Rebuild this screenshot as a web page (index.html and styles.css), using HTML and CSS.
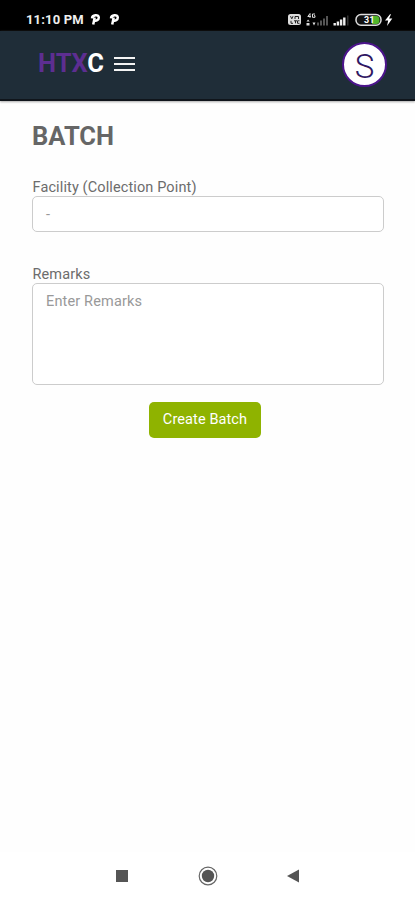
FILE: index.html
```html
<!DOCTYPE html>
<html lang="en">
<head>
<meta charset="utf-8">
<title>Batch</title>
<link rel="stylesheet" href="styles.css">
</head>
<body>
<div class="status">
  <span class="clock">11:10 PM</span>
  <svg class="app" viewBox="0 0 11 13"><path d="M3.2 11.5 4.7 4.4M2 5.4C2.2 1.9 8.7.9 8.8 4.6 8.8 7.2 6.2 8 4.5 7.5" fill="none" stroke="#fff" stroke-width="2.5"/></svg>
  <svg class="app" viewBox="0 0 11 13"><path d="M3.2 11.5 4.7 4.4M2 5.4C2.2 1.9 8.7.9 8.8 4.6 8.8 7.2 6.2 8 4.5 7.5" fill="none" stroke="#fff" stroke-width="2.5"/></svg>
  <svg class="system" viewBox="0 0 108 16">
    <rect x="1" y="2" width="13" height="11" rx="2.5" fill="#ddd"/>
    <path d="m3.5 4.2 1.3 2.6L6 4.2M8 7V4.5h3.5V7M4 8.8v2.5h2M7 8.8h3M8.5 8.8v2.5M12.5 8.8h-2v2.5h2" fill="none" stroke="#222" stroke-width="1"/>
    <path d="M23 1.5 20.8 4.5h3M23 1.5v4.3M28 2h-2.5v3.3H28V3.7h-1" fill="none" stroke="#ddd" stroke-width="1"/>
    <path d="m19.5 9.5 1.6-2 1.6 2zM19.5 11h3v2.5h-3zM25.5 10.5h3l-1.5 3z" fill="#ddd"/>
    <path d="M30 10.5h2v3h-2zM33 8.5h2v5h-2zM36 6.5h2v7h-2zM39 4h2v9.5h-2z" fill="#555"/>
    <path d="M46.5 11h2.4v2.5h-2.4zM49.7 9.5h2.4v4h-2.4zM52.9 7.5h2.4v6h-2.4zM56.1 5.5h2.4v8h-2.4z" fill="#eee"/>
    <path d="M60 3.5h1.5v10H60z" fill="#333"/>
    <rect x="69" y="2.6" width="25" height="10.6" rx="5" fill="#111" stroke="#ddd" stroke-width="1.5"/>
    <path d="M85 4h4.5q3 0 3 4t-3 4H85z" fill="#51b62b"/>
    <text x="77" y="11.2" class="charge">31</text>
    <path d="m103 2.3-5 6.3h3.2L100 14l5.3-7.5h-3.2L104 2.3z" fill="#fff"/>
  </svg>
</div>
<header class="header">
  <div class="brand"><span class="accent">HTX</span>C</div>
  <div class="menu"><i></i><i></i><i></i></div>
  <div class="avatar">S</div>
</header>
<main class="content">
  <h1>BATCH</h1>
  <label class="label" for="facility">Facility (Collection Point)</label>
  <div class="field" id="facility">-</div>
  <label class="label second" for="remarks">Remarks</label>
  <div class="field area" id="remarks">Enter Remarks</div>
  <button class="create">Create Batch</button>
</main>
<nav class="nav">
  <svg viewBox="0 0 24 24"><path d="M6 6h12v12H6z" fill="#555"/></svg>
  <svg viewBox="0 0 24 24"><circle cx="12" cy="12" r="8.8" fill="none" stroke="#666" stroke-width="1.2"/><circle cx="12" cy="12" r="6.2" fill="#555"/></svg>
  <svg viewBox="0 0 24 24"><path d="m5 12 12-6.5v13z" fill="#555"/></svg>
</nav>
</body>
</html>
```
FILE: styles.css
```css
* { box-sizing: border-box; }
body {
  margin: 0;
  height: 900px;
  display: flex;
  flex-direction: column;
  background: #fefefe;
  color: #6c6c6c;
  font-family: Roboto, "Liberation Sans", sans-serif;
  overflow: hidden;
}
.status {
  height: 31px;
  flex: none;
  display: flex;
  align-items: center;
  padding: 8px 20px 0 26px;
  background: #000;
  color: #eee;
}
.clock {
  width: 64px;
  font-size: 13px;
  font-weight: 700;
  line-height: 16px;
  letter-spacing: 0.15px;
  white-space: nowrap;
}
.app { width: 11px; height: 13px; margin-right: 8px; }
.system { width: 108px; height: 16px; margin-left: auto; }
.charge { font-size: 9px; font-weight: 700; fill: #fff; }
.header {
  height: 70px;
  flex: none;
  display: flex;
  align-items: center;
  padding: 0 28px 2px 38px;
  background: #1f2d38;
  border-bottom: 2px solid #10151b;
  box-shadow: 0 1px 2px #aaa;
}
.brand {
  width: 76px;
  color: #fff;
  font-size: 25.5px;
  font-weight: 700;
  line-height: 30px;
  margin-top: -3px;
}
.accent { color: #5d2e91; }
.menu { width: 21px; display: grid; gap: 4px; margin-top: -1px; }
.menu i { height: 2px; background: #f4f4f4; }
.avatar {
  width: 45px;
  height: 45px;
  margin-left: auto;
  border: 2px solid #4c148c;
  border-radius: 50%;
  background: #fff;
  color: #2f1763;
  font-size: 33px;
  font-weight: 300;
  line-height: 46px;
  text-align: center;
}
.content {
  flex: 1;
  display: flex;
  flex-direction: column;
  padding: 20px 31px 0 32px;
}
h1 {
  margin: 0 0 42px;
  color: #666;
  font-size: 25.5px;
  line-height: 30px;
  font-weight: 700;
}
.label {
  height: 17px;
  margin-top: -14px;
  padding-left: 0.5px;
  font-size: 14.5px;
  line-height: 18px;
  letter-spacing: 0.12px;
}
.field {
  height: 36px;
  padding: 9px 12px 7px 13px;
  border: 1px solid #ccc;
  border-radius: 5px;
  background: #fff;
  color: #999;
  font-size: 14.5px;
  line-height: 18px;
  letter-spacing: 0.15px;
}
.second { margin-top: 34px; }
.area { height: 102px; }
.create {
  width: 112px;
  height: 36px;
  margin: 17px 0 0 117px;
  padding: 0 0 1px;
  border: 0;
  border-radius: 5px;
  background: #8fb300;
  color: #fff;
  font: 14.5px/34px Roboto, sans-serif;
  letter-spacing: 0.1px;
}
.nav {
  height: 48px;
  flex: none;
  display: flex;
  align-items: center;
  gap: 62px;
  padding-left: 110px;
  background: #fff;
}
.nav svg { width: 24px; height: 24px; }
```
